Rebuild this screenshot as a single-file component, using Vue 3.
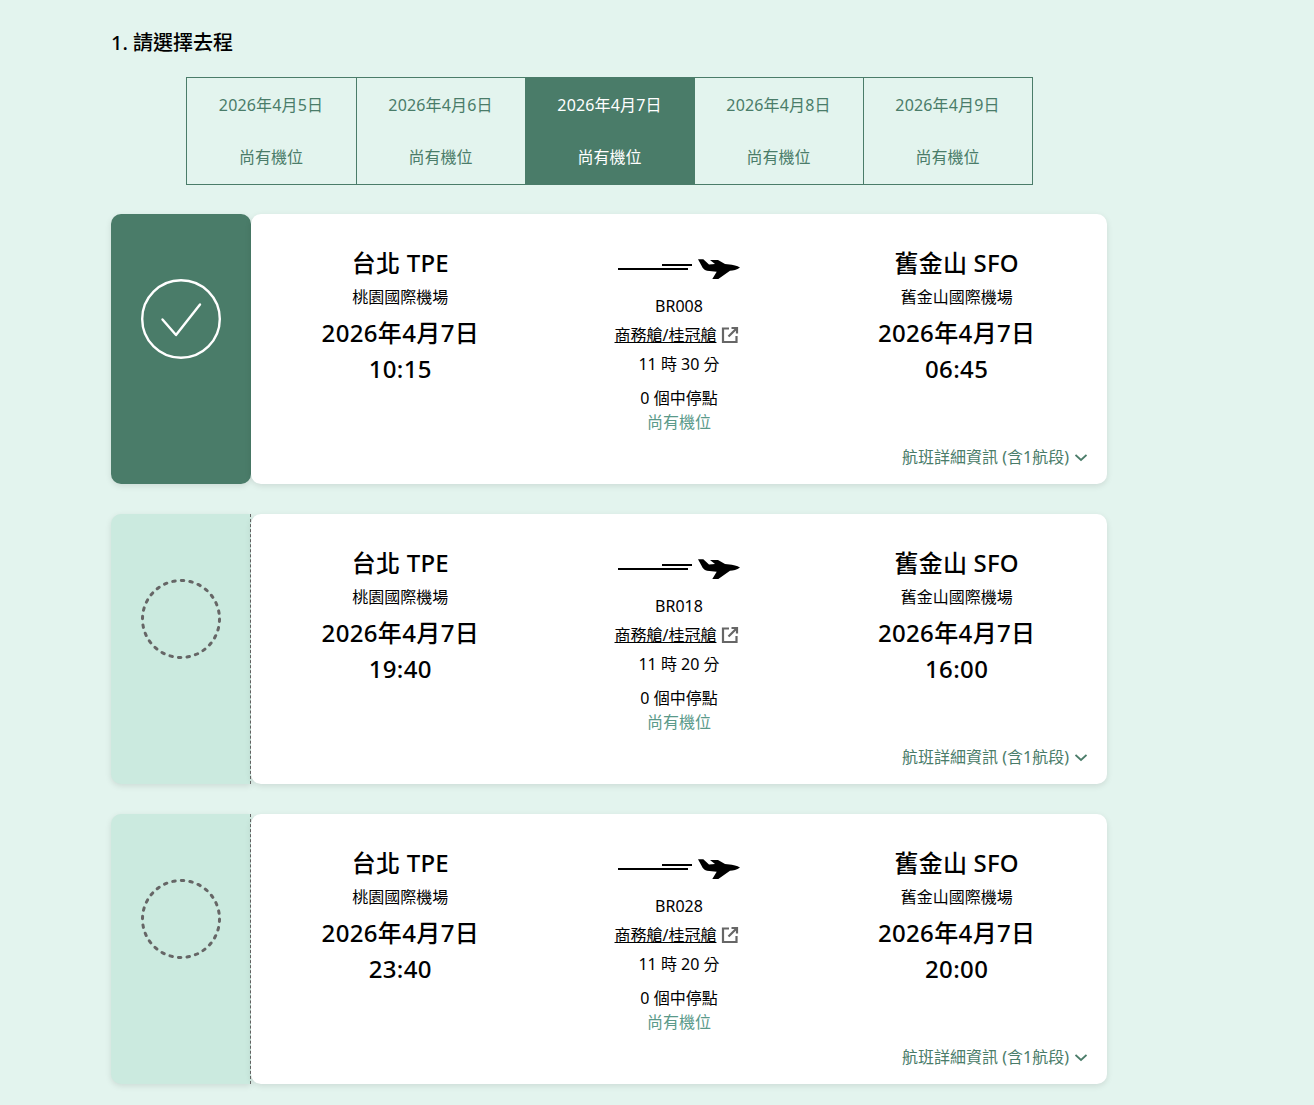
<script setup>
const tabs = [
  { date: "2026年4月5日", active: false },
  { date: "2026年4月6日", active: false },
  { date: "2026年4月7日", active: true },
  { date: "2026年4月8日", active: false },
  { date: "2026年4月9日", active: false },
];

const flights = [
  { no: "BR008", dep: "10:15", arr: "06:45", duration: "11 時 30 分", selected: true },
  { no: "BR018", dep: "19:40", arr: "16:00", duration: "11 時 20 分", selected: false },
  { no: "BR028", dep: "23:40", arr: "20:00", duration: "11 時 20 分", selected: false },
];
</script>

<template>
  <div class="page">
    <h2 class="title">1. 請選擇去程</h2>

    <div class="tabs">
      <div v-for="tab in tabs" :key="tab.date" class="tab" :class="{ active: tab.active }">
        <span class="tab-date">{{ tab.date }}</span>
        <span>尚有機位</span>
      </div>
    </div>

    <div class="list">
      <div v-for="f in flights" :key="f.no" class="flight">
        <div class="select" :class="{ selected: f.selected }">
          <svg v-if="f.selected" width="80" height="80" viewBox="0 0 80 80" fill="none" stroke="#fff" stroke-width="2.4">
            <circle cx="40" cy="40" r="38.8" />
            <path d="M21.500 40.500 L35 56 L59 25.500" stroke-linecap="round" stroke-linejoin="round" />
          </svg>
          <svg v-else width="80" height="80" viewBox="0 0 80 80" fill="none" stroke="#666" stroke-width="3">
            <circle cx="40" cy="40" r="38.500" stroke-dasharray="2.500 6.140" stroke-linecap="round" />
          </svg>
        </div>

        <div class="card">
          <div class="columns">
            <div class="col">
              <div class="city">台北 TPE</div>
              <div class="airport">桃園國際機場</div>
              <div class="big first">2026年4月7日</div>
              <div class="big">{{ f.dep }}</div>
            </div>

            <div class="col middle">
              <svg class="plane" width="124" height="22" viewBox="0 0 124 22">
                <rect x="0" y="10" width="70" height="2" />
                <rect x="44" y="6" width="30" height="2" />
                <path d="M80 1.300 H85.300 L91 6.500 L97 6 L92 2 H100 L107 6 C113 6.300 120 8 122 9.500 C119 11.800 115 12.500 112 12.700 L100.300 21 H94.300 L98.700 13.700 L89 12.700 C86 12 84.500 10 83.700 8 Z" />
              </svg>
              <div class="line no">{{ f.no }}</div>
              <div class="line cabin">
                <span class="cabin-link">商務艙/桂冠艙</span>
                <svg width="18" height="18" viewBox="0 0 18 18" fill="none" stroke="#666" stroke-width="2.2">
                  <path d="M8 2.500 H2 V16 H15.500 V10" />
                  <path d="M7.500 10.500 L15.500 2.500 M10.500 2 H16 V7.500" />
                </svg>
              </div>
              <div class="line">{{ f.duration }}</div>
              <div class="line stops">0 個中停點</div>
              <div class="line seats">尚有機位</div>
            </div>

            <div class="col dest">
              <div class="city">舊金山 SFO</div>
              <div class="airport">舊金山國際機場</div>
              <div class="big first">2026年4月7日</div>
              <div class="big">{{ f.arr }}</div>
            </div>
          </div>

          <div class="details">
            <span>航班詳細資訊 (含1航段)</span>
            <svg width="12" height="8" viewBox="0 0 12 8" fill="none" stroke="#4a7c69" stroke-width="1.800">
              <path d="M0.500 1 L6 6 L11.500 1" />
            </svg>
          </div>
        </div>
      </div>
    </div>
  </div>
</template>

<style>
html,
body {
  background: #e3f4ee;
}
</style>

<style scoped>
.page {
  box-sizing: border-box;
  width: 1314px;
  height: 1105px;
  padding: 30px 0 0 111px;
  overflow: hidden;
  background: #e3f4ee;
  color: #000;
  font-family: "Noto Sans", "Noto Sans CJK TC", sans-serif;
}

.title {
  margin: 0;
  height: 26px;
  font-size: 20px;
  line-height: 26px;
  font-weight: 500;
}

.tabs {
  display: grid;
  grid-template-columns: repeat(5, 1fr);
  box-sizing: border-box;
  width: 847px;
  height: 108px;
  margin: 21px 0 0 75px;
  border: 1px solid #4a7c69;
}

.tab {
  box-sizing: border-box;
  display: flex;
  flex-direction: column;
  align-items: center;
  justify-content: space-between;
  padding: 15px 1px 15px 0;
  border-left: 1px solid #4a7c69;
  color: #4a7c69;
  font-size: 16px;
  line-height: 24px;
}

.tab-date {
  letter-spacing: 0.15px;
}

.tab:first-child {
  border-left: 0;
}

.tab.active {
  background: #4a7c69;
  color: #fff;
}

.list {
  display: flex;
  flex-direction: column;
  gap: 30px;
  margin-top: 29px;
}

.flight {
  display: flex;
  width: 996px;
  height: 270px;
}

.select {
  box-sizing: border-box;
  width: 140px;
  padding: 65px 0 0 30px;
  background: #cbeadf;
  border-radius: 10px 0 0 10px;
  border-right: 1px dashed #666;
  box-shadow: 0 2px 6px rgba(0, 0, 0, 0.1);
}

.select.selected {
  background: #4a7c69;
  border-radius: 10px;
  border-right: 0;
}

.select svg {
  display: block;
}

.card {
  flex: 1;
  box-sizing: border-box;
  padding: 30px 10px 0;
  background: #fff;
  border-radius: 10px;
  box-shadow: 0 2px 6px rgba(0, 0, 0, 0.1);
}

.columns {
  display: grid;
  grid-template-columns: repeat(3, 1fr);
  height: 201px;
}

.col {
  display: flex;
  flex-direction: column;
  align-items: center;
}

.dest {
  padding-right: 2px;
}

.city {
  font-size: 24px;
  line-height: 38px;
  font-weight: 500;
  letter-spacing: 0.2px;
}

.airport {
  margin-top: 1px;
  font-size: 16px;
  line-height: 28px;
}

.big {
  font-size: 24px;
  line-height: 36px;
  font-weight: 500;
  letter-spacing: 0.35px;
}

.big.first {
  margin-top: 4px;
}

.plane {
  display: block;
  margin: 14px 0 0 3px;
}

.line {
  font-size: 16px;
  line-height: 24px;
}

.no {
  margin-top: 14px;
}

.cabin {
  display: flex;
  align-items: center;
  gap: 5px;
  margin-top: 5px;
  margin-left: -4px;
}

.cabin-link {
  text-decoration: underline;
}

.cabin svg {
  display: block;
}

.stops {
  margin-top: 10px;
}

.line:nth-child(4) {
  margin-top: 5px;
}

.seats {
  color: #5a9a8a;
}

.details {
  display: flex;
  justify-content: flex-end;
  align-items: center;
  gap: 6px;
  padding-right: 10px;
  color: #4a7c69;
  font-size: 16px;
  line-height: 24px;
}

.details svg {
  margin-top: 2px;
}
</style>
